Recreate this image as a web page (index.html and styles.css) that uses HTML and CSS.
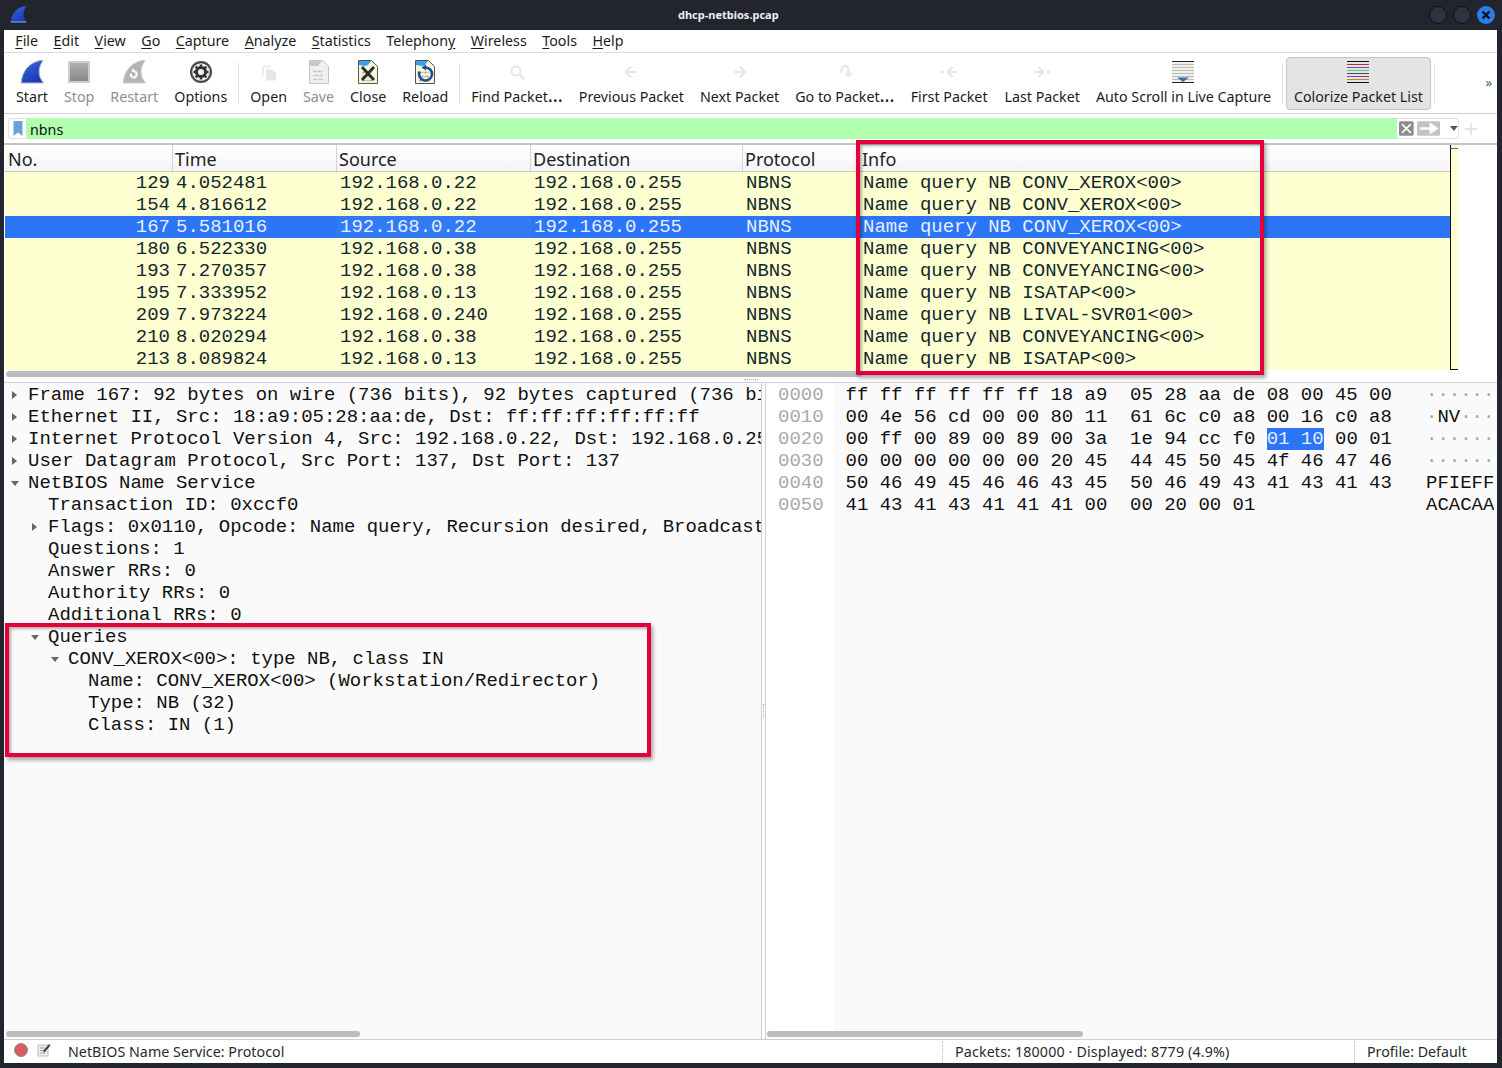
FILE: index.html
```html
<!DOCTYPE html>
<html lang="en">
<head>
<meta charset="utf-8">
<title>dhcp-netbios.pcap</title>
<link rel="stylesheet" href="styles.css">
</head>
<body>
<svg class="defs" width="0" height="0" aria-hidden="true">
  <defs>
    <linearGradient id="fin" x1="0" y1="0" x2="0.6" y2="1"><stop offset="0" stop-color="#2f6fd8"/><stop offset="1" stop-color="#2236b8"/></linearGradient>
    <linearGradient id="stopg" x1="0" y1="0" x2="0" y2="1"><stop offset="0" stop-color="#b0b0b0"/><stop offset="1" stop-color="#868686"/></linearGradient>
    <g id="digits">
      <path d="M6 11.5h2m1 0h1m1 0h2m1 0h1M6 15.5h1m1 0h2m1 0h1m1 0h2M6 19.5h2m1 0h1m1 0h1m1 0h2" stroke-width="1.6" fill="none"/>
    </g>
  </defs>
</svg>
<div class="window">
  <header class="titlebar">
    <svg class="logo" width="17" height="17" viewBox="0 0 24 24"><path d="M1 23C2.500 11 8.500 3 20 .5L23 .5C18.500 7 17 15 23.500 23Z" fill="url(#fin)"/><path d="M1 22.5H23" stroke="#7ab0f0" stroke-width="1.5"/></svg>
    <div class="title">dhcp-netbios.pcap</div>
    <div class="winctl">
      <span class="dot"></span>
      <span class="dot"></span>
      <span class="dot close"><svg width="18" height="18" viewBox="0 0 18 18"><path d="M5.5 5.5l7 7m0-7l-7 7" stroke="#10131a" stroke-width="2.4"/></svg></span>
    </div>
  </header>

  <main class="app">
    <nav class="menubar">
      <span class="menu"><u>F</u>ile</span>
      <span class="menu"><u>E</u>dit</span>
      <span class="menu"><u>V</u>iew</span>
      <span class="menu"><u>G</u>o</span>
      <span class="menu"><u>C</u>apture</span>
      <span class="menu"><u>A</u>nalyze</span>
      <span class="menu"><u>S</u>tatistics</span>
      <span class="menu">Telephon<u>y</u></span>
      <span class="menu"><u>W</u>ireless</span>
      <span class="menu"><u>T</u>ools</span>
      <span class="menu"><u>H</u>elp</span>
    </nav>

    <section class="toolbar">
      <div class="tool"><svg class="ico" viewBox="0 0 24 24"><path d="M1 23C2.500 11 8.500 3 20 .5L23 .5C18.500 7 17 15 23.500 23Z" fill="url(#fin)" stroke="#b4b8c4"/></svg><span>Start</span></div>
      <div class="tool off"><svg class="ico" viewBox="0 0 24 24"><rect x="2" y="2" width="20" height="20" fill="url(#stopg)" stroke="#cdcdcd" stroke-width="2"/></svg><span>Stop</span></div>
      <div class="tool off"><svg class="ico" viewBox="0 0 24 24"><path d="M1 23C2.500 11 8.500 3 20 .5L23 .5C18.500 7 17 15 23.500 23Z" fill="#b4b4b4" stroke="#d0d0d0"/><path d="M11 9v2l3 1c2 3-1 7-4 5-1-.7-1.500-2-1-3.500" fill="none" stroke="#fff" stroke-width="2"/></svg><span>Restart</span></div>
      <div class="tool"><svg class="ico" viewBox="0 0 24 24"><circle cx="12" cy="12" r="11" fill="#4a4a4a"/><circle cx="12" cy="12" r="8.800" fill="#eee"/><circle cx="12" cy="12" r="4.600" fill="none" stroke="#333" stroke-width="3"/><path d="M12 4.500v3M12 16.500v3M4.500 12h3M16.500 12h3M6.700 6.700l2.100 2.100M15.200 15.200l2.100 2.100M17.300 6.700l-2.100 2.100M8.800 15.200l-2.100 2.100" stroke="#333" stroke-width="2.400"/></svg><span>Options</span></div>
      <i class="sep wide"></i>
      <div class="tool"><svg class="ico" viewBox="0 0 24 24"><path d="M5 5.500h9v2H7v8H5Z" fill="#ececec"/><path d="M9 9.500h6l4 4v7H9Z" fill="#e6e6e6"/></svg><span>Open</span></div>
      <div class="tool off"><svg class="ico" viewBox="0 0 24 24"><path d="M2.500 .5h13l6 6v17h-19Z" fill="#f0f0f0" stroke="#c4c4c4"/><path d="M3 1h12l-4 5H3Z" fill="#c8c8c8"/><use href="#digits" stroke="#b4b4b4" transform="translate(.5 0)"/></svg><span>Save</span></div>
      <div class="tool"><svg class="ico" viewBox="0 0 24 24"><path d="M2.500 .5h13l6 6v17h-19Z" fill="#f6f6dc" stroke="#555"/><path d="M3 1h12l-3 4-3 1-6-1-.5 1H3Z" fill="#3f9fe6"/><use href="#digits" stroke="#9a9a88" transform="translate(.5 1)"/><path d="M6 7l12 13M18 7L6 20" stroke="#2c2c2c" stroke-width="2.800"/></svg><span>Close</span></div>
      <div class="tool"><svg class="ico" viewBox="0 0 24 24"><path d="M2.500 .5h13l6 6v17h-19Z" fill="#f6f6dc" stroke="#555"/><path d="M3 1h12l-3 4-3 1-6-1-.5 1H3Z" fill="#3f9fe6"/><use href="#digits" stroke="#9a9a88" transform="translate(.5 1)"/><path d="M12.500 7.500a6.500 6.500 0 1 1-6 4" fill="none" stroke="#1f4f96" stroke-width="2.600"/><path d="M8.500 7.500l4.500-3v6Z" fill="#1f4f96"/></svg><span>Reload</span></div>
      <i class="sep wide"></i>
      <div class="tool"><svg class="ico" viewBox="0 0 24 24"><circle cx="11" cy="11" r="4.500" fill="none" stroke="#e6e6e6" stroke-width="2"/><path d="M14.500 14.500l4.500 4.500" stroke="#e6e6e6" stroke-width="2.500"/></svg><span>Find Packet<em class="ell">…</em></span></div>
      <div class="tool"><svg class="ico" viewBox="0 0 24 24"><path d="M18 12H7m5-5.500L6.500 12l5.500 5.500" fill="none" stroke="#e6e6e6" stroke-width="2"/></svg><span>Previous Packet</span></div>
      <div class="tool"><svg class="ico" viewBox="0 0 24 24"><path d="M6 12h11m-5-5.500L17.500 12 12 17.500" fill="none" stroke="#e6e6e6" stroke-width="2"/></svg><span>Next Packet</span></div>
      <div class="tool"><svg class="ico" viewBox="0 0 24 24"><path d="M8.500 13V9.500a3.500 3.500 0 0 1 7 0V16m-3-3l3 3 3-3" fill="none" stroke="#e6e6e6" stroke-width="2"/></svg><span>Go to Packet<em class="ell">…</em></span></div>
      <div class="tool nudge"><svg class="ico" viewBox="0 0 24 24"><path d="M20 12h-9m4.500-5L10.500 12l5 5" fill="none" stroke="#e6e6e6" stroke-width="2"/><circle cx="5.500" cy="12" r="1.700" fill="#e6e6e6"/></svg><span>First Packet</span></div>
      <div class="tool"><svg class="ico" viewBox="0 0 24 24"><path d="M4 12h9m-4.500-5l5 5-5 5" fill="none" stroke="#e6e6e6" stroke-width="2"/><circle cx="18.500" cy="12" r="1.700" fill="#e6e6e6"/></svg><span>Last Packet</span></div>
      <div class="tool"><svg class="ico" viewBox="0 0 24 24"><rect x="1" y="1" width="22" height="22" fill="#f1f1ec"/><path d="M1 1.500h22M1 22.500h22" stroke="#222"/><path d="M1 4.500h22M1 7.500h22M1 10.500h22M1 13.500h22M1 16.500h22M1 19.500h22" stroke="#bcbcb4"/><path d="M12 22l-6-4.500h12Z" fill="#3b6ea8"/></svg><span>Auto Scroll in Live Capture</span></div>
      <i class="sep wide"></i>
      <div class="tool active"><svg class="ico" viewBox="0 0 24 24"><path d="M1 1.500h22" stroke="#111"/><path d="M1 4.500h22" stroke="#e02020"/><path d="M1 7.500h22" stroke="#2a6bd0"/><path d="M1 10.500h22" stroke="#7cc83c"/><path d="M1 13.500h22" stroke="#2a4a8a"/><path d="M1 16.500h22" stroke="#7a3f96"/><path d="M1 19.500h22" stroke="#b08a20"/><path d="M1 22.500h22" stroke="#111"/></svg><span>Colorize Packet List</span></div>
      <i class="sep"></i>
      <span class="more">»</span>
    </section>

    <section class="filterbar">
      <div class="fbook"><svg width="10" height="15" viewBox="0 0 10 15"><path d="M.5 0h9v15L5 11.500.5 15Z" fill="#6f9fd8"/></svg></div>
      <div class="finput">nbns</div>
      <div class="fbtns">
        <svg width="15" height="15" viewBox="0 0 15 15"><rect width="15" height="15" rx="2" fill="#8c8c8c"/><path d="M3 3l9 9m0-9l-9 9" stroke="#fff" stroke-width="1.600"/></svg>
        <svg class="farrow" width="24" height="15" viewBox="0 0 24 15"><rect width="24" height="15" rx="2" fill="#c2c2c2"/><path d="M3 7.500h13M14 3.500l6 4-6 4Z" stroke="#fff" stroke-width="2.400" fill="#fff"/></svg>
        <svg class="fdrop" width="8" height="5" viewBox="0 0 8 5"><path d="M0 0h8L4 5Z" fill="#555"/></svg>
      </div>
      <svg class="fplus" width="14" height="14" viewBox="0 0 14 14"><path d="M7 1v12M1 7h12" stroke="#e4e4e4" stroke-width="1.800"/></svg>
    </section>

    <section class="packets">
      <div class="plist">
        <div class="phead">
          <span>No.</span><span>Time</span><span>Source</span><span>Destination</span><span>Protocol</span><span>Info</span>
        </div>
        <div class="prow"><span>129</span><span>4.052481</span><span>192.168.0.22</span><span>192.168.0.255</span><span>NBNS</span><span>Name query NB CONV_XEROX&lt;00&gt;</span></div>
        <div class="prow"><span>154</span><span>4.816612</span><span>192.168.0.22</span><span>192.168.0.255</span><span>NBNS</span><span>Name query NB CONV_XEROX&lt;00&gt;</span></div>
        <div class="prow sel"><span>167</span><span>5.581016</span><span class="focus">192.168.0.22</span><span>192.168.0.255</span><span>NBNS</span><span>Name query NB CONV_XEROX&lt;00&gt;</span></div>
        <div class="prow"><span>180</span><span>6.522330</span><span>192.168.0.38</span><span>192.168.0.255</span><span>NBNS</span><span>Name query NB CONVEYANCING&lt;00&gt;</span></div>
        <div class="prow"><span>193</span><span>7.270357</span><span>192.168.0.38</span><span>192.168.0.255</span><span>NBNS</span><span>Name query NB CONVEYANCING&lt;00&gt;</span></div>
        <div class="prow"><span>195</span><span>7.333952</span><span>192.168.0.13</span><span>192.168.0.255</span><span>NBNS</span><span>Name query NB ISATAP&lt;00&gt;</span></div>
        <div class="prow"><span>209</span><span>7.973224</span><span>192.168.0.240</span><span>192.168.0.255</span><span>NBNS</span><span>Name query NB LIVAL-SVR01&lt;00&gt;</span></div>
        <div class="prow"><span>210</span><span>8.020294</span><span>192.168.0.38</span><span>192.168.0.255</span><span>NBNS</span><span>Name query NB CONVEYANCING&lt;00&gt;</span></div>
        <div class="prow"><span>213</span><span>8.089824</span><span>192.168.0.13</span><span>192.168.0.255</span><span>NBNS</span><span>Name query NB ISATAP&lt;00&gt;</span></div>
        <div class="hbar"><i class="thumb t1"></i></div>
      </div>
      <div class="minimap"><i></i></div>
    </section>

    <div class="hsplit"><i></i></div>

    <section class="panes">
      <div class="tree">
        <div class="scrollarea treearea">
          <div class="ln l0"><b class="tw"></b>Frame 167: 92 bytes on wire (736 bits), 92 bytes captured (736 bits)</div>
          <div class="ln l0"><b class="tw"></b>Ethernet II, Src: 18:a9:05:28:aa:de, Dst: ff:ff:ff:ff:ff:ff</div>
          <div class="ln l0"><b class="tw"></b>Internet Protocol Version 4, Src: 192.168.0.22, Dst: 192.168.0.255</div>
          <div class="ln l0"><b class="tw"></b>User Datagram Protocol, Src Port: 137, Dst Port: 137</div>
          <div class="ln l0"><b class="tw open"></b>NetBIOS Name Service</div>
          <div class="ln l1">Transaction ID: 0xccf0</div>
          <div class="ln l1"><b class="tw"></b>Flags: 0x0110, Opcode: Name query, Recursion desired, Broadcast</div>
          <div class="ln l1">Questions: 1</div>
          <div class="ln l1">Answer RRs: 0</div>
          <div class="ln l1">Authority RRs: 0</div>
          <div class="ln l1">Additional RRs: 0</div>
          <div class="ln l1"><b class="tw open"></b>Queries</div>
          <div class="ln l2"><b class="tw open"></b>CONV_XEROX&lt;00&gt;: type NB, class IN</div>
          <div class="ln l3">Name: CONV_XEROX&lt;00&gt; (Workstation/Redirector)</div>
          <div class="ln l3">Type: NB (32)</div>
          <div class="ln l3">Class: IN (1)</div>
        </div>
        <div class="hbar sub"><i class="thumb t2"></i></div>
      </div>
      <div class="vsplit"><i></i></div>
      <div class="hex">
        <div class="scrollarea hexarea">
          <div class="offsets"><div>0000</div><div>0010</div><div>0020</div><div>0030</div><div>0040</div><div>0050</div></div>
          <div class="bytes">
            <div>ff ff ff ff ff ff 18 a9  05 28 aa de 08 00 45 00   <span class="dim">··············</span></div>
            <div>00 4e 56 cd 00 00 80 11  61 6c c0 a8 00 16 c0 a8   <span class="dim">·</span>NV<span class="dim">··········</span></div>
            <div>00 ff 00 89 00 89 00 3a  1e 94 cc f0 <span class="hl">01 10</span> 00 01   <span class="dim">··············</span></div>
            <div>00 00 00 00 00 00 20 45  44 45 50 45 4f 46 47 46   <span class="dim">··············</span></div>
            <div>50 46 49 45 46 46 43 45  50 46 49 43 41 43 41 43   PFIEFFCEPFICACAC</div>
            <div>41 43 41 43 41 41 41 00  00 20 00 01               ACACAAA</div>
          </div>
        </div>
        <div class="hbar sub"><i class="thumb t3"></i></div>
      </div>
    </section>

    <footer class="statusbar">
      <svg class="sdot" width="14" height="14" viewBox="0 0 14 14"><circle cx="7" cy="7" r="6.500" fill="#dd5a5e" stroke="#8c8c8c"/></svg>
      <svg class="snote" width="14" height="14" viewBox="0 0 14 14"><path d="M1 2h10v11H1Z" fill="#eef2ee" stroke="#bbb"/><path d="M3 5h5M3 7.500h6M3 10h5" stroke="#99a"/><path d="M6 8l6-7 1.500 1.500-6 7Z" fill="#3a4a5a"/></svg>
      <span class="smsg">NetBIOS Name Service: Protocol</span>
      <span class="scount">Packets: 180000 · Displayed: 8779 (4.9%)</span>
      <span class="sprof">Profile: Default</span>
    </footer>
  </main>

  <div class="mark m1"></div>
  <div class="mark m2"></div>
</div>
</body>
</html>
```

FILE: styles.css
```css
* { box-sizing: border-box; }
html, body { margin: 0; padding: 0; }
body { width: 1502px; height: 1068px; overflow: hidden; background: #22252e; }
.defs { position: absolute; }
.window { position: relative; display: flex; flex-direction: column; width: 1502px; height: 1068px; background: #22252e; font-family: "Noto Sans", sans-serif; font-size: 14.25px; color: #1c1c1c; }

.titlebar { display: flex; align-items: center; height: 30px; flex: none; padding-left: 10px; color: #eceff4; }
.logo { flex: none; margin-top: -1px; }
.title { margin: -2px 0 0 651px; font-size: 11px; font-weight: 700; white-space: nowrap; }
.winctl { display: flex; gap: 6px; margin-left: auto; padding-right: 7px; }
.dot { display: block; width: 18px; height: 18px; border-radius: 50%; background: #2f3340; border: 1px solid #0e1014; }
.dot.close { background: #2b7de9; border: 0; }
.dot svg { display: block; }

.app { flex: 1; display: flex; flex-direction: column; margin: 0 5px 5px 4px; min-height: 0; background: #fff; }

.menubar { display: flex; flex: none; height: 23px; padding: 0 3px 0 3.500px; align-items: center; border-bottom: 1px solid #dcdcdc; }
.menu { padding: 0 7.750px; white-space: nowrap; line-height: 20px; }
.menu u { text-underline-offset: 2px; }

.toolbar { display: flex; flex: none; height: 61px; padding: 4px 0 3px 4px; border-bottom: 1px solid #cfcfcf; }
.tool { display: flex; flex-direction: column; align-items: center; flex: none; padding: 3px 8px; white-space: nowrap; }
.tool.nudge { padding-right: 9px; }
.tool span { display: block; line-height: 20px; margin-top: 3px; }
.ell { font-style: normal; font-size: 19px; line-height: 14px; }
.ico { display: block; width: 24px; height: 24px; flex: none; }
.tool.off { color: #8e8e8e; }
.tool.active { background: #e4e4e4; border: 1px solid #c4c4c4; border-radius: 4px; padding: 2px 7px; }
.sep { display: block; flex: none; width: 1px; height: 41px; margin: 6px 2px 0 3px; background: #e2e2e2; }
.sep.wide { margin-right: 3px; }
.more { margin-left: auto; padding: 17px 5px 0 0; font-size: 13px; line-height: 16px; color: #555; }

.filterbar { display: flex; flex: none; align-items: center; height: 31px; padding: 5px 0 5px 4px; border-bottom: 2px solid #c4c4c4; }
.fbook { display: flex; align-items: center; justify-content: center; flex: none; width: 18px; height: 21px; border: 1px solid #e2e2e2; border-right: 0; border-radius: 3px 0 0 3px; }
.finput { flex: none; width: 1371px; height: 21px; padding-left: 4px; line-height: 23px; background: #afffaf; color: #111; overflow: hidden; }
.fbtns { display: flex; align-items: center; flex: none; width: 62px; height: 21px; padding-left: 2px; border: 1px solid #e2e2e2; border-left: 0; border-radius: 0 4px 4px 0; }
.fbtns svg { display: block; }
.farrow { margin-left: 3px; }
.fdrop { margin-left: 10px; }
.fplus { flex: none; margin-left: 5px; }

.packets { display: flex; flex: none; height: 232px; padding-left: 1px; }
.plist { flex: none; width: 1445px; font-family: "Liberation Mono", monospace; font-size: 18.980px; color: #12272e; }
.phead { display: grid; grid-template-columns: 168px 164px 194px 212px 116px 1fr; height: 27px; border-bottom: 1px solid #c8c8c8; background: linear-gradient(#fff, #f4f4f4); font-family: "Noto Sans", sans-serif; font-size: 18px; line-height: 28px; color: #222; }
.phead span { padding-left: 2px; border-right: 1px solid #d4d4d4; white-space: nowrap; }
.phead span:first-child, .phead span:last-child { padding-left: 3px; }
.phead span:last-child { border-right: 0; }
.prow { display: grid; grid-template-columns: 168px 164px 194px 212px 116px 1fr; height: 22px; line-height: 22px; background: #feffd0; white-space: pre; }
.prow span { padding-left: 3px; overflow: hidden; }
.prow span:first-child { padding: 0 3px 0 0; text-align: right; }
.prow span:last-child { padding-left: 4px; }
.prow.sel { background: #2b75f6; color: #e6efff; }
.prow .focus { background: #3279f4; }
.hbar { height: 11px; padding-top: 1px; background: #fff; }
.thumb { display: block; height: 6px; border-radius: 3px; background: #bcbcbc; }
.t1 { width: 856px; margin-left: 1px; }
.minimap { flex: none; width: 8px; height: 225px; background: #feffd0; border-left: 1px solid #111; border-bottom: 1px solid #111; }
.minimap i { display: block; height: 1px; margin-top: 3px; background: #2b75f6; }

.hsplit { display: flex; flex: none; justify-content: center; align-items: center; height: 6px; border-bottom: 1px solid #d0d0d0; }
.hsplit i { width: 14px; border-top: 1px dotted #aaa; }

.panes { flex: 1; display: flex; min-height: 0; font-family: "Liberation Mono", monospace; font-size: 18.980px; color: #111; }
.tree { flex: none; width: 757px; display: flex; flex-direction: column; min-width: 0; }
.hex { flex: 1; display: flex; flex-direction: column; min-width: 0; border-left: 1px solid #d0d0d0; }
.vsplit { display: flex; flex: none; align-items: center; justify-content: center; width: 4px; border-left: 1px solid #d0d0d0; }
.vsplit i { height: 14px; border-left: 1px dotted #aaa; }
.scrollarea { flex: 1; min-height: 0; overflow: hidden; background: #fafafa; }
.treearea { padding-top: 1px; }
.ln { position: relative; height: 22px; line-height: 22px; white-space: pre; overflow: hidden; }
.l0 { padding-left: 24px; }
.l1 { padding-left: 44px; }
.l2 { padding-left: 64px; }
.l3 { padding-left: 84px; }
.tw { position: absolute; top: 7px; margin-left: -16px; width: 0; height: 0; border-left: 5px solid #666; border-top: 4px solid transparent; border-bottom: 4px solid transparent; }
.tw.open { top: 9px; margin-left: -17px; border-top: 5px solid #666; border-left: 4px solid transparent; border-right: 4px solid transparent; border-bottom: 0; }
.hbar.sub { flex: none; height: 8px; padding-top: 0; background: #fafafa; }
.t2 { width: 354px; margin-left: 2px; }
.t3 { width: 316px; margin-left: 1px; }

.hexarea { display: flex; }
.offsets { flex: none; width: 68px; padding: 1px 0 0 12px; background: #fff; color: #a9a9a9; line-height: 22px; }
.bytes { flex: 1; min-width: 0; margin-right: 3px; padding: 1px 0 0 11.500px; line-height: 22px; overflow: hidden; }
.bytes div { white-space: pre; }
.dim { color: #a4a4a4; }
.hl { background: #2b75f6; color: #e6efff; }

.statusbar { display: flex; flex: none; align-items: center; height: 24px; border-top: 1px solid #cfcfcf; color: #2a2a2a; white-space: nowrap; }
.sdot { flex: none; margin: -3px 0 0 10px; }
.snote { flex: none; margin-left: 9px; margin-top: -3px; }
.smsg { flex: none; width: 874px; margin-left: 17px; letter-spacing: .03px; }
.scount { flex: none; width: 412px; height: 22px; padding-left: 12px; line-height: 22px; border-left: 1px dotted #bbb; letter-spacing: .15px; }
.sprof { flex: 1; height: 22px; padding-left: 12px; line-height: 22px; border-left: 1px dotted #bbb; }

.mark { position: absolute; border: 4px solid #e5003c; box-shadow: 2px 3px 4px rgba(0, 0, 0, .35), inset 2px 2px 3px rgba(0, 0, 0, .3); pointer-events: none; }
.m1 { left: 856px; top: 140px; width: 408px; height: 235px; }
.m2 { left: 5px; top: 623px; width: 646px; height: 134px; }
```
